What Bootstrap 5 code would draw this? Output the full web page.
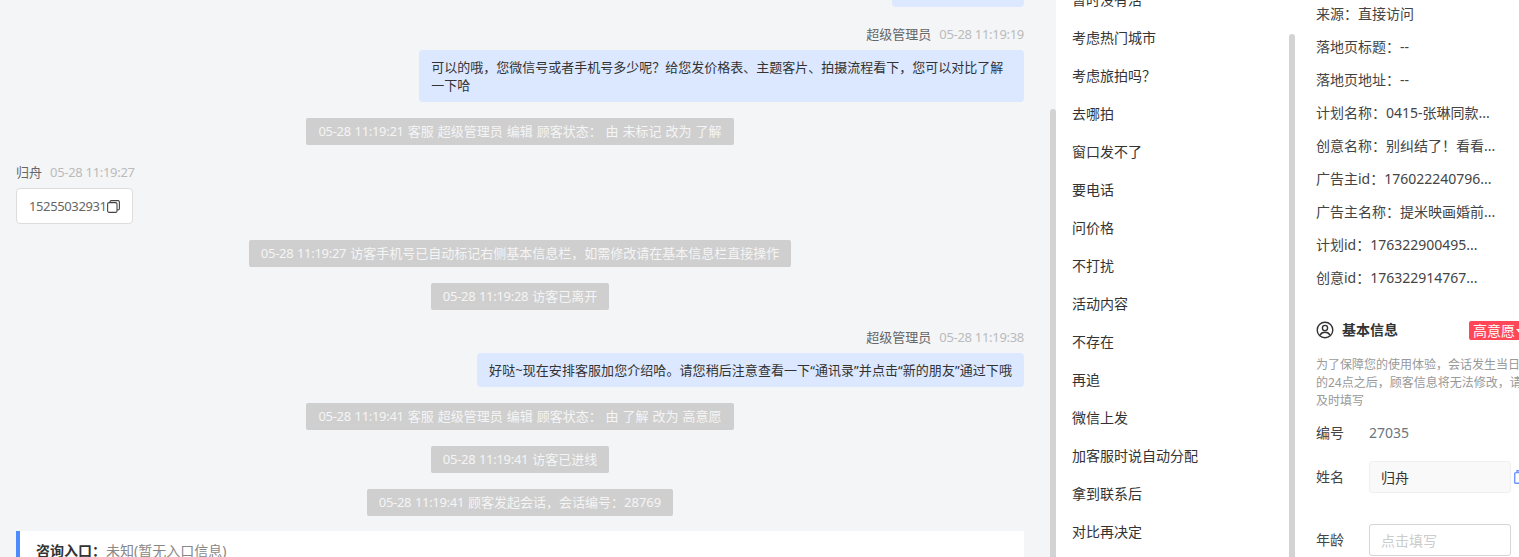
<!DOCTYPE html>
<html lang="zh-CN">
<head>
    <meta charset="UTF-8">
    <meta name="viewport" content="width=device-width, initial-scale=1.0">
    <title>会话详情</title>
    <link rel="stylesheet" href="https://cdn.jsdelivr.net/npm/bootstrap@5.3.0/dist/css/bootstrap.min.css">
    <style>
        html, body {
            height: 100%;
            overflow: hidden;
        }

        body {
            font-family: "Noto Sans", "Noto Sans CJK SC", sans-serif;
            font-size: 13px;
            line-height: 18px;
            color: #333;
            background-color: #f4f5f7;
        }

        .page-wrap {
            height: 557px;
        }

        .pane {
            position: relative;
            overflow: hidden;
            height: 557px;
            flex-shrink: 0;
        }

        .pane-chat {
            width: 1056px;
        }

        .pane-words {
            width: 239px;
            background-color: #fff;
        }

        .pane-info {
            width: 224px;
            background-color: #fff;
        }

        .thumb {
            position: absolute;
            right: 0;
            bottom: 0;
            width: 6px;
            background-color: #d3d3d3;
            border-radius: 3px 3px 0 0;
        }

        .thumb-chat {
            top: 109px;
        }

        .thumb-words {
            top: 34px;
        }

        .chat-flow {
            width: 1008px;
            margin-left: 16px;
            margin-top: -20px;
        }

        .num-tight {
            letter-spacing: -0.3px;
        }

        .bubble {
            max-width: 60%;
            padding: 8px 12px;
            background-color: #dce8ff;
            border-radius: 4px;
            color: #333;
        }

        .bubble-old {
            width: 132px;
            height: 27px;
        }

        .bubble-quoted {
            letter-spacing: 0.065px;
        }

        .msg-head {
            height: 18px;
            margin-top: 18px;
            margin-bottom: 7px;
            color: #666;
        }

        .msg-time {
            margin-left: 8px;
            color: #bbb;
        }

        .sys-pill {
            height: 27px;
            line-height: 27px;
            padding: 0 12px;
            background-color: #cfcfcf;
            border-radius: 2px;
            color: #f5f5f5;
            white-space: nowrap;
            word-spacing: 0.6px;
        }

        .phone-card {
            height: 36px;
            padding: 0 12px;
            background-color: #fff;
            border: 1px solid #ddd;
            border-radius: 4px;
            color: #666;
        }

        .phone-card .num-tight {
            letter-spacing: -0.38px;
        }

        .entry-bar {
            height: 40px;
            margin-top: 15px;
            padding: 11px 16px;
            background-color: #fff;
            border-left: 4px solid #4d8cff;
            color: #888;
            font-size: 14px;
        }

        .entry-bar b {
            color: #333;
            font-weight: 700;
        }

        .words-flow {
            margin-top: -19px;
        }

        .words-flow .list-group-item {
            height: 38px;
            padding: 10px 16px;
            border: 0;
            color: #333;
            background: transparent;
            font-size: 14px;
            line-height: 18px;
        }

        .info-flow {
            width: 240px;
            margin-top: -3px;
            padding-left: 21px;
            font-size: 14px;
        }

        .src-row {
            height: 33px;
            padding: 8px 0;
            color: #444;
            white-space: nowrap;
        }

        .base-head {
            height: 20px;
            margin-top: 26px;
        }

        .base-title {
            margin-left: 8px;
            font-weight: 700;
            color: #333;
        }

        .intent-tag {
            height: 19px;
            line-height: 19px;
            margin-left: auto;
            margin-right: 6px;
            padding-left: 4px;
            width: 60px;
            background-color: #ff4757;
            color: #fff;
            border-radius: 2px;
            font-size: 14px;
            white-space: nowrap;
        }

        .caret-down {
            display: inline-block;
            margin-left: 1px;
            vertical-align: 2px;
            border-left: 4px solid transparent;
            border-right: 4px solid transparent;
            border-top: 5px solid #fff;
        }

        .note-text {
            width: 206px;
            margin-top: 16px;
            font-size: 12px;
            color: #999;
        }

        .id-row {
            margin-top: 14px;
        }

        .name-row {
            margin-top: 19px;
        }

        .age-row {
            margin-top: 31px;
        }

        .field-row {
            height: 32px;
        }

        .field-name {
            width: 53px;
            color: #444;
        }

        .field-input.form-control {
            width: 142px;
            height: 32px;
            padding: 0 11px;
            font-size: 14px;
            line-height: 18px;
            color: #333;
            border-color: #d5d5d5;
            border-radius: 3px;
            box-shadow: none;
            font-family: inherit;
        }

        .field-input.form-control::placeholder {
            color: #ccc;
        }

        .field-input.form-control:disabled {
            background-color: #f9f9f9;
            border-color: #f0f0f0;
            opacity: 1;
        }

        .name-copy {
            margin-left: 3px;
            flex-shrink: 0;
        }
    </style>
</head>

<body>
    <div class="page-wrap d-flex">

        <div class="pane pane-chat">
            <div class="chat-flow d-flex flex-column">
                <div class="bubble bubble-old align-self-end"></div>

                <div class="msg-head align-self-end">超级管理员<span class="msg-time num-tight">05-28 11:19:19</span></div>
                <div class="bubble align-self-end">可以的哦，您微信号或者手机号多少呢？给您发价格表、主题客片、拍摄流程看下，您可以对比了解一下哈</div>

                <div class="sys-pill align-self-center mt-3"><span class="num-tight">05-28 11:19:21</span> 客服 超级管理员 编辑 顾客状态： 由 未标记 改为 了解</div>

                <div class="msg-head align-self-start">归舟<span class="msg-time num-tight">05-28 11:19:27</span></div>
                <div class="phone-card align-self-start d-flex align-items-center"><span class="num-tight">15255032931</span>
                    <svg width="13" height="13" viewBox="0 0 13 13" fill="none" stroke="#444" stroke-width="1.1">
                        <rect x="0.6" y="2.6" width="9.4" height="9.8" rx="1.5"/>
                        <path d="M3 2.4V2a1.4 1.4 0 0 1 1.4-1.4h6.6A1.4 1.4 0 0 1 12.4 2v6.5a1.4 1.4 0 0 1-1.4 1.4h-.8"/>
                    </svg>
                </div>

                <div class="sys-pill align-self-center mt-3"><span class="num-tight">05-28 11:19:27</span> 访客手机号已自动标记右侧基本信息栏，如需修改请在基本信息栏直接操作</div>
                <div class="sys-pill align-self-center mt-3"><span class="num-tight">05-28 11:19:28</span> 访客已离开</div>

                <div class="msg-head align-self-end">超级管理员<span class="msg-time num-tight">05-28 11:19:38</span></div>
                <div class="bubble bubble-quoted align-self-end text-nowrap">好哒~现在安排客服加您介绍哈。请您稍后注意查看一下“通讯录”并点击“新的朋友”通过下哦</div>

                <div class="sys-pill align-self-center mt-3"><span class="num-tight">05-28 11:19:41</span> 客服 超级管理员 编辑 顾客状态： 由 了解 改为 高意愿</div>
                <div class="sys-pill align-self-center mt-3"><span class="num-tight">05-28 11:19:41</span> 访客已进线</div>
                <div class="sys-pill align-self-center mt-3"><span class="num-tight">05-28 11:19:41</span> 顾客发起会话，会话编号：28769</div>

                <div class="entry-bar"><b>咨询入口：</b>未知(暂无入口信息)</div>
            </div>
            <div class="thumb thumb-chat"></div>
        </div>

        <div class="pane pane-words">
            <div class="words-flow list-group list-group-flush">
                <div class="list-group-item">暂时没有活</div>
                <div class="list-group-item">考虑热门城市</div>
                <div class="list-group-item">考虑旅拍吗？</div>
                <div class="list-group-item">去哪拍</div>
                <div class="list-group-item">窗口发不了</div>
                <div class="list-group-item">要电话</div>
                <div class="list-group-item">问价格</div>
                <div class="list-group-item">不打扰</div>
                <div class="list-group-item">活动内容</div>
                <div class="list-group-item">不存在</div>
                <div class="list-group-item">再追</div>
                <div class="list-group-item">微信上发</div>
                <div class="list-group-item">加客服时说自动分配</div>
                <div class="list-group-item">拿到联系后</div>
                <div class="list-group-item">对比再决定</div>
            </div>
            <div class="thumb thumb-words"></div>
        </div>

        <div class="pane pane-info">
            <div class="info-flow">
                <div class="src-row">来源：直接访问</div>
                <div class="src-row">落地页标题：--</div>
                <div class="src-row">落地页地址：--</div>
                <div class="src-row">计划名称：0415-张琳同款...</div>
                <div class="src-row">创意名称：别纠结了！看看...</div>
                <div class="src-row">广告主id：176022240796...</div>
                <div class="src-row">广告主名称：提米映画婚前...</div>
                <div class="src-row">计划id：176322900495...</div>
                <div class="src-row">创意id：176322914767...</div>

                <div class="base-head d-flex align-items-center">
                    <svg width="18" height="18" viewBox="0 0 18 18" fill="none" stroke="#333" stroke-width="1.4">
                        <circle cx="9" cy="9" r="7.8"/>
                        <circle cx="9" cy="7" r="2.6"/>
                        <path d="M4 14.2c.8-2 2.6-3 5-3s4.200 1 5 3"/>
                    </svg>
                    <span class="base-title">基本信息</span>
                    <span class="intent-tag">高意愿<i class="caret-down"></i></span>
                </div>

                <div class="note-text">为了保障您的使用体验，会话发生当日的24点之后，顾客信息将无法修改，请及时填写</div>

                <div class="id-row d-flex align-items-center">
                    <span class="field-name">编号</span>
                    <span class="text-secondary">27035</span>
                </div>

                <div class="name-row field-row d-flex align-items-center">
                    <span class="field-name">姓名</span>
                    <input class="field-input form-control" type="text" value="归舟" disabled>
                    <svg class="name-copy" width="12" height="14" viewBox="0 0 12 14" fill="none" stroke="#6f94ff" stroke-width="1.4">
                        <rect x="0.7" y="2.6" width="10" height="10.7" rx="1"/>
                        <path d="M3 2.600V.8h5v1.800"/>
                    </svg>
                </div>

                <div class="age-row field-row d-flex align-items-center">
                    <span class="field-name">年龄</span>
                    <input class="field-input form-control" type="text" placeholder="点击填写">
                </div>
            </div>
        </div>

    </div>
    <script src="https://cdn.jsdelivr.net/npm/bootstrap@5.3.0/dist/js/bootstrap.bundle.min.js"></script>
</body>

</html>
